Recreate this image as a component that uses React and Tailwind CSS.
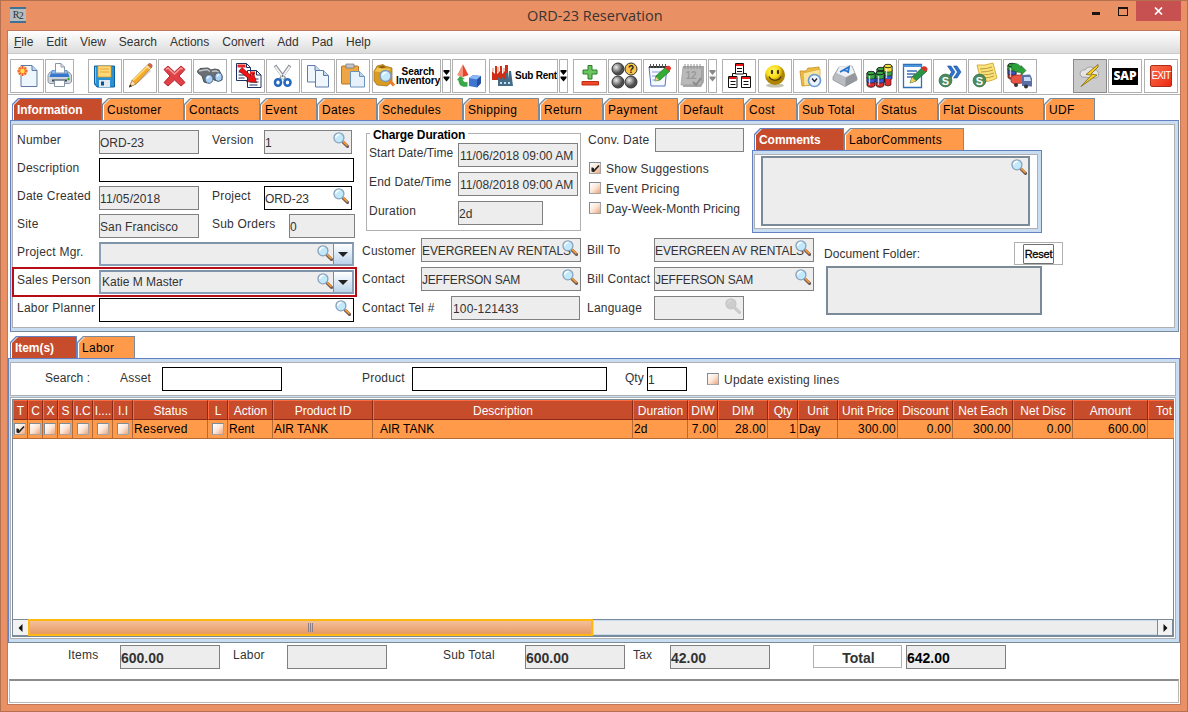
import { useState } from "react"

const MENU = ["File", "Edit", "View", "Search", "Actions", "Convert", "Add", "Pad", "Help"]

const TABS = [
  { name: "Information", w: 90 },
  { name: "Customer", w: 82 },
  { name: "Contacts", w: 76 },
  { name: "Event", w: 57 },
  { name: "Dates", w: 60 },
  { name: "Schedules", w: 86 },
  { name: "Shipping", w: 76 },
  { name: "Return", w: 64 },
  { name: "Payment", w: 75 },
  { name: "Default", w: 66 },
  { name: "Cost", w: 53 },
  { name: "Sub Total", w: 79 },
  { name: "Status", w: 62 },
  { name: "Flat Discounts", w: 106 },
  { name: "UDF", w: 51 },
]

const COLUMNS = [
  { head: "T", w: 15, check: true, on: true },
  { head: "C", w: 15, check: true },
  { head: "X", w: 15, check: true },
  { head: "S", w: 15, check: true },
  { head: "I.C", w: 20, check: true },
  { head: "I....", w: 20, check: true },
  { head: "I.I", w: 20, check: true },
  { head: "Status", w: 75, value: "Reserved", wide: true },
  { head: "L", w: 20, check: true },
  { head: "Action", w: 45, value: "Rent" },
  { head: "Product ID", w: 100, value: "AIR TANK" },
  { head: "Description", w: 260, value: "AIR TANK", indent: true },
  { head: "Duration", w: 55, value: "2d" },
  { head: "DIW", w: 30, value: "7.00", right: true },
  { head: "DIM", w: 50, value: "28.00", right: true },
  { head: "Qty", w: 30, value: "1", right: true },
  { head: "Unit", w: 40, value: "Day" },
  { head: "Unit Price", w: 60, value: "300.00", right: true },
  { head: "Discount", w: 55, value: "0.00", right: true },
  { head: "Net Each", w: 60, value: "300.00", right: true },
  { head: "Net Disc", w: 60, value: "0.00", right: true },
  { head: "Amount", w: 75, value: "600.00", right: true },
  { head: "Tot", w: 26, value: "", last: true },
]

export default function App() {
  const [tab, setTab] = useState("Information")

  return (
    <div className="flex h-[712px] w-[1188px] flex-col overflow-hidden border border-[#b5704f] bg-[#e99065] px-[6px] font-['Liberation_Sans',Arial,sans-serif] text-xs text-[#333]">
      <TitleBar />
      <div className="flex h-[675px] w-[1174px] flex-col border border-[#c1785a] bg-white">
        <div className="flex h-[23px] shrink-0 items-center border-b border-[#ccc] bg-gradient-to-b from-white to-[#dcdcdc] pl-[6px]">
          {MENU.map((m, i) => (
            <span key={m} className="mr-[13px]">
              {i === 0 ? <><u>F</u>ile</> : m}
            </span>
          ))}
        </div>
        <Toolbar />

        <div className="mt-[3px] flex h-[22px] shrink-0 pl-[4px]">
          {TABS.map(t => (
            <Tab key={t.name} name={t.name} width={t.w} active={t.name === tab} onClick={() => setTab(t.name)} />
          ))}
        </div>
        <div className="ml-[2px] h-[212px] w-[1169px] shrink-0 border border-r-[#7a8a99] border-b-[#7a8a99] border-t-[#6382bf] border-l-[#6382bf] bg-[#c8ddf2] pt-[3px] pr-[3px] pb-[3px] pl-px">
          <InformationForm />
        </div>

        <ItemsSection />
        <Totals />
        <div className="mt-[10px] ml-px h-[24px] w-[1170px] shrink-0 border border-[#b8b8b8] border-t-2 border-t-[#8c8c8c] bg-white" />
      </div>
    </div>
  )
}

function TitleBar() {
  return (
    <div className="flex h-[29px] shrink-0 items-start">
      <div className="mt-[6px] ml-[3px] flex h-[16px] w-[16px] items-center justify-center border-y-2 border-[#3f7196] bg-[#b9bcbc] font-['Liberation_Serif',serif] text-[10px] tracking-[-0.5px] text-[#26313a]">
        R<span className="mt-[2px]">2</span>
      </div>
      <div className="mt-[5px] ml-[501px] flex-1 font-['Open_Sans',sans-serif] text-[14.5px] leading-5 text-[#3a332f]">
        ORD-23 Reservation
      </div>
      <div className="mr-[18px] h-[14px] w-[8px] border-b-[3px] border-[#1c1412]" />
      <div className="mt-[6px] mr-[8px] h-[9px] w-[10px] border border-t-2 border-[#1c1412]" />
      <div className="mr-0 flex h-[20px] w-[45px] items-center justify-center bg-[#c75050]">
        <svg width="9" height="8" viewBox="0 0 9 8" stroke="#fff" strokeWidth="1.7">
          <path d="M1 0.5 8 7.5M8 0.5 1 7.5" />
        </svg>
      </div>
    </div>
  )
}

function Tab({ name, width, active, onClick }) {
  return (
    <button
      onClick={onClick}
      style={{ width }}
      className={`h-[22px] shrink-0 pt-px pr-px pl-px [clip-path:polygon(6px_0,100%_0,100%_100%,0_100%,0_6px)] ${active ? "bg-[#6382bf]" : "bg-[#7a8a99]"}`}
    >
      <div className="h-full w-full bg-white pl-px [clip-path:polygon(6px_0,100%_0,100%_100%,0_100%,0_6px)]">
        <div
          className={`flex h-full items-center pl-[3px] whitespace-nowrap [clip-path:polygon(6px_0,100%_0,100%_100%,0_100%,0_6px)] ${active ? "bg-[#c64c2c] font-bold tracking-[-0.05px] text-white" : "bg-[#fe9a4a] tracking-[0.33px] text-black"}`}
        >
          {name}
        </div>
      </div>
    </button>
  )
}

function Label({ children, className = "", tight }) {
  return <span className={`h-5 shrink-0 leading-5 whitespace-nowrap ${tight ? "tracking-[0.04px]" : "tracking-[0.22px]"} ${className}`}>{children}</span>
}

function Field({ value, className = "", lens, disabled, editable }) {
  return (
    <div
      className={`flex h-[24px] shrink-0 items-center overflow-hidden border leading-[22px] whitespace-nowrap ${editable ? "border-black bg-white" : "border-[#808080] bg-[#ededed]"} ${className}`}
    >
      <span className="min-w-0 flex-1 pt-[2px]">{value}</span>
      {lens && <Lens disabled={disabled} className="mr-[2px] mb-[4px]" />}
    </div>
  )
}

function Lens({ disabled, className = "" }) {
  const rim = disabled ? "#c6c6c6" : "#8aa3bb"
  return (
    <svg width="16" height="16" viewBox="0 0 17 17" className={`-ml-[16px] shrink-0 ${className}`}>
      <path d="m10 10 1.6 1.6" stroke={disabled ? "#c8c8c8" : "#777"} strokeWidth="2" />
      <path d="m11 11 4.4 4.2" stroke={disabled ? "#c8c8c8" : "#6d5a58"} strokeWidth="3.4" strokeLinecap="round" />
      <path d="m11.3 10.6 3.6 3.4" stroke={disabled ? "#cecece" : "#f0983a"} strokeWidth="2" strokeLinecap="round" />
      <circle cx="6.3" cy="6.2" r="5.3" fill={disabled ? "#cdcdcd" : "#c2e8fb"} stroke={rim} strokeWidth="1.4" />
      <path d="M3 6a3.4 3.4 0 0 1 4-3.3" fill="none" stroke={disabled ? "#d8d8d8" : "#fff"} strokeWidth="1.6" />
    </svg>
  )
}

function Combo({ value }) {
  return (
    <div className="flex h-[24px] w-[255px] border-2 border-[#8ba0b6] border-t-[#7f93a8] bg-[#ededed]">
      <span className="flex-1 pl-px leading-[20px]">{value}</span>
      <Lens className="mt-px" />
      <span className="flex w-[19px] items-center justify-center border-l border-[#7a8a99] bg-gradient-to-b from-white to-[#bcd3ea] pt-px">
        <svg width="10" height="5" viewBox="0 0 10 5"><path d="M0 0h10L5 5z" fill="#222" /></svg>
      </span>
    </div>
  )
}

function Check({ on, className = "" }) {
  return (
    <span className={`flex h-[12px] w-[12px] shrink-0 items-center justify-center border border-[#7f8b97] border-r-[#a9a4a4] border-b-[#a9a4a4] bg-gradient-to-br from-white via-[#fbe6d8] to-[#eda478] ${className}`}>
      {on && (
        <svg width="9" height="9" viewBox="0 0 9 9">
          <path d="M1.3 3.5v4M2.2 4v4M2.5 7.5 8 1.5" stroke="#222" strokeWidth="1.7" fill="none" />
        </svg>
      )}
    </span>
  )
}

function InformationForm() {
  return (
    <div className="flex h-[204px] w-[1163px] border border-[#b0b0b0] bg-white pl-px">
      <div className="w-[341px] shrink-0 pt-[5px]">
        <div className="flex h-[28px] pl-[3px]">
          <Label className="w-[82px]">Number</Label>
          <Field value="ORD-23" className="w-[100px]" />
          <Label className="ml-[13px] w-[52px]">Version</Label>
          <Field value="1" className="w-[88px]" lens />
        </div>
        <div className="flex h-[28px] pl-[3px]">
          <Label className="w-[82px]">Description</Label>
          <Field value="" className="w-[255px]" editable />
        </div>
        <div className="flex h-[28px] pl-[3px]">
          <Label className="w-[82px]">Date Created</Label>
          <Field value="11/05/2018" className="w-[100px] tracking-[0.1px]" />
          <Label className="ml-[13px] w-[52px]">Project</Label>
          <Field value="ORD-23" className="w-[88px]" lens editable />
        </div>
        <div className="flex h-[28px] pl-[3px]">
          <Label className="w-[82px]">Site</Label>
          <Field value="San Francisco" className="w-[100px] tracking-[0.1px]" />
          <Label className="ml-[13px] w-[77px]">Sub Orders</Label>
          <Field value="0" className="w-[66px]" />
        </div>
        <div className="flex h-[28px] pl-[3px]">
          <Label className="w-[82px]">Project Mgr.</Label>
          <Combo value="" />
        </div>
        <div className="-mt-px mb-[3px] flex h-[26px] pt-px pl-[3px] outline-2 outline-[#b80d14]">
          <Label className="w-[82px]">Sales Person</Label>
          <Combo value="Katie M Master" />
        </div>
        <div className="flex h-[28px] pl-[3px]">
          <Label className="w-[82px]">Labor Planner</Label>
          <Field value="" className="w-[255px]" editable lens />
        </div>
      </div>

      <div className="flex-1">
        <div className="flex h-[113px]">
          <ChargeDuration />
          <div className="ml-[6px] w-[165px] shrink-0 pt-[3px]">
            <div className="flex h-[30px] pl-px">
              <Label className="mt-[2px] w-[67px]">Conv. Date</Label>
              <Field value="" className="w-[89px]" />
            </div>
            <CheckRow on text="Show Suggestions" />
            <CheckRow text="Event Pricing" />
            <CheckRow text="Day-Week-Month Pricing" tight />
          </div>
          <Comments />
        </div>

        <div className="flex pl-[7px]">
          <div className="w-[219px] shrink-0">
            <div className="flex h-[29px]">
              <Label className="mt-[3px] w-[59px]">Customer</Label>
              <Field value="EVERGREEN AV RENTALS" className="w-[160px] tracking-[-0.1px]" lens />
            </div>
            <div className="flex h-[29px]">
              <Label className="mt-[2px] w-[59px]">Contact</Label>
              <Field value="JEFFERSON SAM" className="w-[160px] tracking-[-0.2px]" lens />
            </div>
            <div className="flex h-[29px]">
              <Label className="mt-[2px] w-[89px]">Contact Tel #</Label>
              <Field value="100-121433" className="w-[129px] pl-px tracking-[0.15px]" />
            </div>
          </div>
          <div className="ml-[6px] w-[227px] shrink-0">
            <div className="flex h-[29px]">
              <Label className="mt-[2px] w-[67px]">Bill To</Label>
              <Field value="EVERGREEN AV RENTALS" className="w-[160px] tracking-[-0.1px]" lens />
            </div>
            <div className="flex h-[29px]">
              <Label className="mt-[2px] w-[67px]">Bill Contact</Label>
              <Field value="JEFFERSON SAM" className="w-[160px] tracking-[-0.2px]" lens />
            </div>
            <div className="flex h-[29px]">
              <Label className="mt-[2px] w-[67px]">Language</Label>
              <Field value="" className="w-[90px]" lens disabled />
            </div>
          </div>
          <div className="ml-[10px] pt-[4px]">
            <div className="flex h-[24px]">
              <Label className="mt-[2px] w-[190px]" tight>Document Folder:</Label>
              <div className="flex h-[23px] w-[49px] items-center justify-center border border-[#b0b0b0]">
                <button className="h-[20px] w-[31px] rounded-[1px] border border-[#707070] text-[11px] leading-[18px] tracking-[-0.2px] text-black [-webkit-text-stroke:0.3px_black]">Reset</button>
              </div>
            </div>
            <div className="ml-[2px] h-[49px] w-[216px] border-2 border-[#7a8a99] bg-[#ededed]" />
          </div>
        </div>
      </div>
    </div>
  )
}

function ChargeDuration() {
  return (
    <div className="mt-[8px] ml-[11px] h-[98px] w-[215px] shrink-0 border border-[#b0b0b0] pl-[2px]">
      <div className="-mt-[8px] mb-[-1px] ml-[1px] h-[18px] w-fit bg-white px-[3px] leading-[18px] font-bold tracking-[-0.12px] text-black">
        Charge Duration
      </div>
      <div className="flex h-[29px]">
        <Label className="w-[89px]" tight>Start Date/Time</Label>
        <Field value="11/06/2018 09:00 AM" className="w-[120px] pl-px" />
      </div>
      <div className="flex h-[29px]">
        <Label className="w-[89px]">End Date/Time</Label>
        <Field value="11/08/2018 09:00 AM" className="w-[120px] pl-px" />
      </div>
      <div className="flex h-[29px]">
        <Label className="w-[89px]">Duration</Label>
        <Field value="2d" className="w-[85px]" />
      </div>
    </div>
  )
}

function CheckRow({ on, text, tight }) {
  return (
    <div className="flex h-5 items-center pl-[2px]">
      <Check on={on} />
      <Label className="mt-[2px] ml-[5px]" tight={tight}>{text}</Label>
    </div>
  )
}

function Comments() {
  return (
    <div className="w-[290px] shrink-0 pt-[3px]">
      <div className="flex h-[22px] pl-[2px]">
        <Tab name="Comments" width={90} active />
        <Tab name="LaborComments" width={120} />
      </div>
      <div className="h-[83px] border border-[#6382bf] bg-[#c8ddf2] pt-[3px] pr-[3px] pb-[3px] pl-px">
        <div className="h-full border border-[#b0b0b0] bg-white pt-px pl-[6px]">
          <div className="flex h-[70px] w-[269px] items-start justify-end border-2 border-[#7a8a99] bg-[#ededed] pt-px pr-px">
            <Lens />
          </div>
        </div>
      </div>
    </div>
  )
}

function ItemsSection() {
  return (
    <>
      <div className="mt-[4px] flex h-[22px] shrink-0 pl-[2px]">
        <Tab name="Item(s)" width={67} active />
        <Tab name="Labor" width={58} />
      </div>
      <div className="h-[285px] w-[1172px] shrink-0 border border-r-[#7a8a99] border-b-[#7a8a99] border-t-[#6382bf] border-l-[#6382bf] bg-[#c8ddf2] pt-[3px] pr-[3px] pb-[3px] pl-px">
        <div className="flex h-[34px] border border-[#b0b0b0] bg-white pt-[4px]">
          <Label className="mt-px ml-[34px] w-[75px]" tight>Search :</Label>
          <Label className="mt-px w-[42px]">Asset</Label>
          <Field value="" className="w-[120px]" editable />
          <Label className="mt-px ml-[80px] w-[50px]">Product</Label>
          <Field value="" className="w-[195px]" editable />
          <Label className="mt-px ml-[18px] w-[22px]" tight>Qty</Label>
          <Field value="1" className="w-[40px]" editable />
          <Check className="mt-[6px] ml-[20px]" />
          <Label className="mt-[3px] ml-[5px]">Update existing lines</Label>
        </div>
        <div className="mt-px h-[242px] border border-[#b0b0b0] bg-white p-px">
          <div className="flex h-[238px] flex-col border border-[#7a8a99]">
            <ItemTable />
            <ScrollBar />
          </div>
        </div>
      </div>
    </>
  )
}

function ItemTable() {
  return (
    <div className="w-[1161px] flex-1 overflow-hidden">
      <div className="flex h-[20px]">
        {COLUMNS.map(c => (
          <div
            key={c.head}
            style={{ width: c.w }}
            className={`flex shrink-0 items-center overflow-hidden border border-t-[#ff6a40] border-b-[#8b2a16] border-l-[#ff6a40] bg-[#c64c2c] pt-px whitespace-nowrap text-white ${c.last ? "border-r-0 pl-[7px]" : "justify-center border-r-[#8b2a16]"}`}
          >
            {c.head}
          </div>
        ))}
      </div>
      <div className="flex h-[19px] border-b border-[#b56a35] bg-[#fe9a4a] text-black">
        {COLUMNS.map(c => (
          <div
            key={c.head}
            style={{ width: c.w }}
            className={`flex shrink-0 items-center overflow-hidden whitespace-nowrap ${c.last ? "" : "border-r border-[#b56a35]"} ${c.check ? "justify-center" : c.right ? "justify-end pr-px" : c.indent ? "pl-[7px]" : "pl-px"} ${c.right ? "tracking-[0.2px]" : ""} ${c.wide ? "tracking-[0.3px]" : ""}`}
          >
            {c.check ? <Check on={c.on} /> : c.value}
          </div>
        ))}
      </div>
    </div>
  )
}

function ScrollBar() {
  return (
    <div className="flex h-[17px] w-[1160px] shrink-0 border-y border-[#7a8a99] bg-[#ededed]">
      <span className="flex w-[15px] items-center justify-center bg-[#f2f2f2]">
        <svg width="5" height="8" viewBox="0 0 5 8"><path d="M4.5 0v8L0.5 4z" fill="#111" /></svg>
      </span>
      <div className="-my-px flex w-[565px] items-center justify-center gap-px border-2 border-[#fdb813] bg-gradient-to-b from-[#f3c09a] to-[#e89a62]">
        <span className="h-[9px] w-px bg-[#8d7f86]" />
        <span className="h-[9px] w-px bg-[#8d7f86]" />
        <span className="h-[9px] w-px bg-[#8d7f86]" />
      </div>
      <div className="flex-1 border-y border-l border-[#c8ddf2]" />
      <span className="flex w-[16px] items-center justify-center border-x border-[#7a8a99] bg-[#f2f2f2]">
        <svg width="5" height="8" viewBox="0 0 5 8"><path d="M0.5 0v8l4-4z" fill="#111" /></svg>
      </span>
    </div>
  )
}

function Totals() {
  return (
    <div className="flex h-[26px] shrink-0 pt-[2px] pl-[60px]">
      <Label className="w-[52px]">Items</Label>
      <Field value="600.00" className="w-[100px] text-sm font-bold" />
      <Label className="ml-[13px] w-[54px]">Labor</Label>
      <Field value="" className="w-[100px]" />
      <Label className="ml-[56px] w-[82px]">Sub Total</Label>
      <Field value="600.00" className="w-[100px] text-sm font-bold" />
      <Label className="ml-[8px] w-[37px]">Tax</Label>
      <Field value="42.00" className="w-[100px] text-sm font-bold" />
      <div className="ml-[43px] h-[23px] w-[89px] border border-[#b0b0b0] pt-[2px] pl-[2px] text-center text-sm leading-5 font-bold">Total</div>
      <Field value="642.00" className="ml-[4px] w-[100px] text-sm font-bold text-black" />
    </div>
  )
}

/* ---------- toolbar ---------- */

function Tool({ children, className = "w-[34px]", pressed }) {
  return (
    <button className={`flex h-[34px] shrink-0 items-center overflow-hidden border ${pressed ? "border-[#8a8a8a] bg-[#cbcbcb]" : "border-[#b0b0b0] bg-white"} ${className}`}>
      {children}
    </button>
  )
}

function Icon({ children, w = 32 }) {
  return <svg width={w} height="32" viewBox={`0 0 ${w} 32`} fill="none" className="shrink-0">{children}</svg>
}

function Drop({ off }) {
  const c = off ? "#8a8a8a" : "#000"
  return (
    <Tool className="w-[9px]">
      <svg width="7" height="32" viewBox="0 0 7 32" fill={c}>
        <path d="M0.5 10h6v1.5L3.5 15 0.5 11.5zM0.5 16.5h6V18L3.5 21.5 0.5 18z" />
      </svg>
    </Tool>
  )
}

function Barrel({ x, y, top, mid, low }) {
  return (
    <g transform={`translate(${x} ${y})`}>
      <path d="M0 2v12c0 3 8 3 8 0V2z" fill={low} stroke="#111" strokeWidth="0.8" />
      <path d="M0 6v4.500c0 2 8 2 8 0V6z" fill={mid} stroke="#111" strokeWidth="0.6" />
      <path d="M0 2v4.500c0 2 8 2 8 0V2z" fill={top} stroke="#111" strokeWidth="0.6" />
      <ellipse cx="4" cy="2" rx="4" ry="1.7" fill={top} stroke="#111" strokeWidth="0.8" />
      <path d="M2.500 5v9" stroke="#fff" strokeOpacity="0.7" strokeWidth="1.300" />
    </g>
  )
}

function Coin({ x, y }) {
  return (
    <g>
      <circle cx={x} cy={y} r="6.4" fill="#4d8a5c" stroke="#3a6e48" strokeWidth="0.8" />
      <text x={x} y={y + 4} textAnchor="middle" fontSize="11" fontWeight="bold" fill="#fff">S</text>
    </g>
  )
}

function Toolbar() {
  return (
    <div className="flex h-[41px] w-[1172px] shrink-0 gap-px border-b border-[#b0b0b0] pt-[5px] pl-[2px]">
      {/* new */}
      <Tool>
        <Icon>
          <path d="M10 5.500h11l5 5v16H10z" fill="#edf5fd" stroke="#5d7ba6" />
          <path d="M21 5.500v5h5" fill="#bdd3ec" stroke="#5d7ba6" />
          <circle cx="11.500" cy="11" r="5" fill="#f9b064" />
          <path d="M11.500 6v10M6.500 11h10M8 7.500l7 7M15 7.500l-7 7" stroke="#f25b2d" strokeWidth="1.300" />
          <circle cx="11.500" cy="11" r="2.300" fill="#ffe14d" />
        </Icon>
      </Tool>
      {/* print */}
      <Tool className="w-[29px]">
        <Icon w={27}>
          <path d="M2 15 4 12h19l2.500 3v7l-2 1.500h-20L2 22z" fill="#cfd4da" stroke="#8f99a5" />
          <path d="M6 10h15l2.500 7H3.500z" fill="#3577cf" />
          <path d="M6.500 10.500h14l1 3H5.500z" fill="#8dbdf3" />
          <path d="M9.500 3.500H15l3.500 3.500v6h-9z" fill="#fff" stroke="#8796a8" />
          <path d="M15 3.500V7h3.500" stroke="#8796a8" />
          <path d="M6 20.500h15" stroke="#3c434b" strokeWidth="2" />
          <path d="M8.500 20.500h10v6h-10z" fill="#fff" stroke="#8796a8" />
          <circle cx="22.500" cy="19" r="1.200" fill="#21b421" />
        </Icon>
      </Tool>
      {/* save */}
      <Tool className="ml-[13px] w-[34px]">
        <Icon>
          <path d="M5.500 6h20v21H8l-2.500-3z" fill="#2a92d2" stroke="#11609e" />
          <path d="M6.500 7v16" stroke="#78c6ef" />
          <path d="M9 6h13v11H9z" fill="#fcd877" stroke="#d99b22" strokeWidth="0.700" />
          <path d="M11 9h9M11 12h9" stroke="#e2a63d" />
          <path d="M10 20h11v7H10z" fill="#dfeaf3" />
          <path d="M12 21.500h3v4h-3z" fill="#164f8b" />
        </Icon>
      </Tool>
      {/* edit */}
      <Tool>
        <Icon>
          <path d="M5.500 27 14 23 27 11l-1-1-13 12z" fill="#d0d0d0" />
          <path d="M5.500 27 8 20.500 24 4.500l3.500 3L12 24z" fill="#f8a92a" stroke="#9c6a1f" strokeWidth="0.700" />
          <path d="M9 20.500 24 6" stroke="#ffe077" strokeWidth="1.500" />
          <path d="M5.500 27 8 20.500l4 3.500z" fill="#f6dfb6" stroke="#9c6a1f" strokeWidth="0.500" />
          <path d="m5 27.500 1-3 2 1.500z" fill="#222" />
          <path d="m24 4.500 1-.8c1.500-.7 4 1.300 3 3l-.8 1z" fill="#e0644c" stroke="#8f3a2a" strokeWidth="0.500" />
          <path d="m22.500 6 3.500 3" stroke="#e6e6e6" strokeWidth="1.300" />
        </Icon>
      </Tool>
      {/* delete */}
      <Tool>
        <Icon>
          <path d="M9 6 15.500 12 22 6l4 3.500-6 6.500 6 6.500-4 3.500-6.500-6L9 26l-4-3.500 6-6.500-6-6.500z" fill="#df4146" stroke="#b52731" strokeLinejoin="round" />
          <path d="m7 9.500 2-1.500 6.500 6 6.500-6 1.500 1.500" stroke="#f59b99" strokeWidth="1.500" />
        </Icon>
      </Tool>
      {/* find */}
      <Tool>
        <Icon>
          <path d="M3.500 11 6 8.500l8-.5 3 2 4-1 4 1 3 6v4l-4 1-4-1-3-4-1 2-3 5-3-1-2-6-4-3z" fill="#6b6e72" stroke="#505356" strokeLinejoin="round" />
          <path d="m5 11 8-1.500 3 2M18 11.500l4-.8 3 2" stroke="#c1c5c9" strokeWidth="1.500" />
          <ellipse cx="15" cy="19" rx="4" ry="4.300" fill="#a9d0f7" stroke="#4c6279" />
          <ellipse cx="24.500" cy="17" rx="3.600" ry="4.200" fill="#a9d0f7" stroke="#4c6279" />
          <path d="M13 18.500q1-2 2.500-1.500M23 16.500q1-2 2.500-1.500" stroke="#fff" strokeWidth="1.300" />
        </Icon>
      </Tool>
      {/* transfer */}
      <Tool className="ml-[3px] w-[34px]">
        <Icon>
          <path d="M4.500 3.500h10l4 4v13h-14zM15.500 10.500h9l4.500 4.500v12.500H15.500z" fill="#fff" stroke="#1e3263" />
          <path d="M5.500 4.500h8v3h-8zM18 11.500h5v3h-5z" fill="#e8251f" />
          <path d="M14.500 3.500v4h4M24.500 10.500V15H29M6.500 12h5M6.500 15h7M6.500 18h6M17.500 19h9M17.500 22h9M17.500 25h8" stroke="#1e3263" />
          <path d="m7 11 3-3.500 9 8 2.500-2.500 3 9.500-10-1 2.500-2.500z" fill="#f11313" stroke="#5a0a0a" strokeWidth="0.600" />
        </Icon>
      </Tool>
      {/* cut */}
      <Tool>
        <Icon>
          <path d="M8 5.500 18 19M23 5.500 13.500 19" stroke="#8b9197" strokeWidth="3.200" />
          <path d="M8.300 6.500 17 18.500M22.700 6.500 14.500 18.500" stroke="#f2f4f6" strokeWidth="1.900" />
          <circle cx="15.600" cy="16" r="1" fill="#777" />
          <ellipse cx="11" cy="22.500" rx="3" ry="3.300" stroke="#2469bd" strokeWidth="2.600" />
          <ellipse cx="20.500" cy="22.500" rx="3" ry="3.300" stroke="#2469bd" strokeWidth="2.600" />
        </Icon>
      </Tool>
      {/* copy */}
      <Tool>
        <Icon>
          <path d="M5.500 5.500h7.500l5 5V22H5.500z" fill="#f0f6fd" stroke="#5f7ca8" />
          <path d="M13 5.500v5h5" fill="#c5d8ee" stroke="#5f7ca8" />
          <path d="M13.500 10.500h8l5 5V27h-13z" fill="#f0f6fd" stroke="#5f7ca8" />
          <path d="M21.500 10.500v5h5" fill="#c5d8ee" stroke="#5f7ca8" />
        </Icon>
      </Tool>
      {/* paste */}
      <Tool>
        <Icon>
          <rect x="4.500" y="6" width="17" height="18" rx="1" fill="#eda643" stroke="#bd7321" />
          <path d="M9 4h8v4H9z" fill="#c2c6cb" stroke="#6f747b" strokeWidth="0.700" />
          <path d="M13.500 11.500h9l5 5V27h-14z" fill="#e7f1fc" stroke="#6d92bd" />
          <path d="M22.500 11.500v5h5" fill="#bcd5ef" stroke="#6d92bd" />
        </Icon>
      </Tool>
      {/* search inventory */}
      <Tool className="ml-px w-[69px]">
        <Icon w={24}>
          <path d="m1 11 2-3 1-2 6-1.500 2 1.500 7 2v14l-5 4-10-1-3-4z" fill="#d99b22" stroke="#9b6712" strokeWidth="0.700" />
          <path d="m1.500 11.500 3-4L18 9l-5 3.500z" fill="#f2c54f" />
          <path d="m5 7 5-1.500 3 2-4 1z" fill="#8b5d10" />
          <circle cx="12.500" cy="16" r="5.500" fill="#c4e7fa" stroke="#7a98b4" strokeWidth="1.400" />
          <path d="M9.500 15.500a3.500 3.500 0 0 1 4-3" stroke="#fff" strokeWidth="1.500" />
          <path d="m16.500 20.500 4.500 5" stroke="#ea7b30" strokeWidth="3" />
        </Icon>
        <span className="-ml-px w-[44px] text-center text-[10px] leading-[9.5px] font-bold tracking-[-0.1px] text-black">Search Inventory</span>
      </Tool>
      <Drop />
      {/* assets */}
      <Tool>
        <Icon>
          <path d="m10 4.500 5.500 10.500-5.500 2-5.500-2z" fill="#e6442d" />
          <path d="m10 4.500-5.500 10.500 5.500 2z" fill="#f9927a" />
          <path d="m4 20 3-4 5 3-2.500.5c1 2 2 3 5 2.500v4.500c-6 1-8.500-1-9-6z" fill="#39a849" />
          <path d="m16 18 4-3 8 1v7l-4 4.500-8-1.500z" fill="#3f76cf" />
          <path d="m16 18 4-3 8 1-4 3.500z" fill="#8db7f2" />
          <path d="M24 19.500v8l4-4.500v-7z" fill="#2650a0" />
        </Icon>
      </Tool>
      {/* sub rent */}
      <Tool className="ml-[2px] w-[69px]">
        <Icon w={25}>
          <path d="M2 20v-9l3 3V6h2v8l3-3V6h2v8l3-3V5h3v15z" fill="#cf2d15" />
          <path d="M3 8v3M8 7v5M14 8v4" stroke="#f07b4c" />
          <path d="M8 26V17l4 3v-3l4 3v-7h2v6l1-8h2l2 15z" fill="#456b88" />
          <path d="M10 22h2v2h-2zM14 22h2v2h-2zM18 22h2v2h-2z" fill="#c3e0f1" />
        </Icon>
        <span className="w-[42px] text-[10px] font-bold tracking-[-0.25px] whitespace-nowrap text-black">Sub Rent</span>
      </Tool>
      <Drop />
      {/* add remove */}
      <Tool className="ml-[4px] w-[34px]">
        <Icon>
          <path d="M14 5.500h4V10h5v4h-5v5h-4v-5H9v-4h5z" fill="#6cc45f" stroke="#267e29" />
          <path d="M8 21.500h16.500v3.500H8z" fill="#f0492a" stroke="#be2c14" />
        </Icon>
      </Tool>
      {/* status balls */}
      <Tool>
        <Icon>
          <defs>
            <radialGradient id="ball" cx="0.35" cy="0.35"><stop stopColor="#eee" /><stop offset="1" stopColor="#4c4c4c" /></radialGradient>
          </defs>
          <circle cx="9" cy="9" r="6" fill="url(#ball)" stroke="#333" />
          <circle cx="22" cy="9" r="6" fill="#f9c546" stroke="#333" />
          <circle cx="9" cy="22" r="6" fill="url(#ball)" stroke="#333" />
          <circle cx="22" cy="22" r="6" fill="url(#ball)" stroke="#333" />
          <text x="22" y="13" textAnchor="middle" fontSize="10" fontWeight="bold" fill="#222">?</text>
        </Icon>
      </Tool>
      {/* notepad */}
      <Tool>
        <Icon>
          <path d="M5 7h18l-2 19H7z" fill="#f6f9fd" stroke="#5a74c2" />
          <path d="M5 6h18v2H5z" fill="#333" />
          <path d="M6.500 4v4M9.500 4v4M12.500 4v4M15.500 4v4M18.500 4v4M21.500 4v4" stroke="#555" />
          <path d="M8 12h9M8 16h7M8.500 20h4" stroke="#8b99df" />
          <path d="m11 21 1-5 10-9 4 4-10 9z" fill="#35ad35" stroke="#196a1c" strokeWidth="0.700" />
          <path d="m21 8 2-2c2-1 4.500 1 4 3l-2 2z" fill="#e7332c" />
          <path d="m11 21 1-4 3 3z" fill="#f2cf93" />
        </Icon>
      </Tool>
      {/* calendar, unavailable */}
      <Tool className="w-[29px]">
        <Icon w={27}>
          <path d="M4 6h21v16l-3 5H4z" fill="#a9a9a9" />
          <path d="M4 7h19l-1 18H2z" fill="#b9b9b9" stroke="#999" strokeWidth="0.700" />
          <path d="M6 4v5M9 4v5M12 4v5M15 4v5M18 4v5M21 4v5" stroke="#929292" />
          <text x="12" y="19" textAnchor="middle" fontSize="10" fontWeight="bold" fill="#999">12</text>
          <path d="m14 22 3 3 5-7" stroke="#8b8b8b" strokeWidth="2" />
        </Icon>
      </Tool>
      <Drop off />
      {/* tree */}
      <Tool className="ml-[4px] w-[34px]">
        <Icon>
          <path d="M9.500 17v-3.500h3M23.500 17v-3.500h-3" stroke="#111" />
          <path d="M12.500 3.500h8v10.500h-8zM5.500 16.500h8.500v11H5.500zM18.500 16.500h9v11h-9z" fill="#fff" stroke="#111" />
          <path d="M13 4h7v2h-7zM6 17h7.500v2H6zM19 17h8v2h-8z" fill="#ed1616" />
          <path d="M14 8.500h5M14 11.500h5M7.500 21.500h5M7.500 24.500h5M20.500 21.500h5M20.500 24.500h5" stroke="#111" />
        </Icon>
      </Tool>
      {/* smiley */}
      <Tool className="ml-px w-[34px]">
        <Icon>
          <defs>
            <radialGradient id="face" cx="0.4" cy="0.3"><stop stopColor="#fff76a" /><stop offset="0.65" stopColor="#f8dc16" /><stop offset="1" stopColor="#ad8404" /></radialGradient>
          </defs>
          <ellipse cx="16" cy="25.500" rx="9" ry="2" fill="#c4c4b0" />
          <circle cx="16" cy="15" r="10" fill="url(#face)" />
          <ellipse cx="13" cy="12" rx="1.200" ry="2.200" fill="#453208" />
          <ellipse cx="19" cy="12" rx="1.200" ry="2.200" fill="#453208" />
          <path d="M10 16.500c2 5 10 5 12 0" stroke="#453208" strokeWidth="1.200" />
        </Icon>
      </Tool>
      {/* history folder */}
      <Tool>
        <Icon>
          <path d="m6 11 6 0 2-3h3l8-1v17l-17 2z" fill="#efbd43" stroke="#c18b20" strokeWidth="0.800" />
          <path d="m9 13 17-4v14l-16 3z" fill="#fae49a" stroke="#d29e30" strokeWidth="0.700" />
          <circle cx="20.500" cy="20.500" r="6" fill="#e9f4ff" stroke="#6a9bd3" strokeWidth="1.700" />
          <path d="m18 18.500 2.500 3 2.500-3" stroke="#223" strokeWidth="1.300" />
        </Icon>
      </Tool>
      {/* key cap */}
      <Tool>
        <Icon>
          <path d="m4 17 6-10 13-1 5 12v2l-12 6.500L4 20z" fill="#b9bcc1" stroke="#878c91" strokeWidth="0.700" />
          <path d="m10.500 6.500 12-.5 3 7-9 4-9-4z" fill="#f0f1f4" />
          <path d="m16.500 18 0 8.500L28 20v-2l-2.500-5z" fill="#94989d" />
          <path d="m11 12 9-5-1 6m-5-3 5 1.500" stroke="#2475cb" strokeWidth="1.800" />
        </Icon>
      </Tool>
      {/* barrels */}
      <Tool>
        <Icon>
          <Barrel x={13} y={7} top="#37a546" mid="#375bd3" low="#dc2b31" />
          <Barrel x={20} y={4} top="#f0df3c" mid="#35a546" low="#375bd3" />
          <Barrel x={3} y={11} top="#37a546" mid="#375bd3" low="#dc2b31" />
          <Barrel x={12} y={11} top="#37a546" mid="#375bd3" low="#dc2b31" />
          <path d="M21 19v6q3 2 6 0v-6" fill="#dc2b31" stroke="#111" strokeWidth="0.600" />
        </Icon>
      </Tool>
      {/* edit form */}
      <Tool>
        <Icon>
          <path d="M4.500 4.500h18v23h-18z" fill="#fff" stroke="#2e72bc" strokeWidth="1.300" />
          <path d="M4.500 5h18v2h-18z" fill="#4e94da" />
          <path d="M8 11h10M8 14h8M8 17h6" stroke="#3b70b3" strokeWidth="1.500" />
          <path d="m11 23 2-6L24 7l4 4-11 10z" fill="#299544" stroke="#175d29" strokeWidth="0.700" />
          <path d="m13 17 4 4-6 2z" fill="#f2c85a" />
          <path d="m22 8.500 2-2c2-1 5 1 4.500 3.500l-2 2z" fill="#d7352c" />
        </Icon>
      </Tool>
      {/* charge forward */}
      <Tool>
        <Icon>
          <path d="M13.500 6h3.500l4 6-4 6h-3.500l4-6zM19.500 6H23l4 6-4 6h-3.500l4-6z" fill="#2b73cf" stroke="#1e539b" strokeWidth="0.600" />
          <Coin x={11.5} y={20.5} />
        </Icon>
      </Tool>
      {/* charge note */}
      <Tool>
        <Icon>
          <path d="M8 5q8 1 16-2l4 15q-9 5-16 3z" fill="#fbe37a" stroke="#cb9d25" strokeWidth="0.800" />
          <path d="M11 9q7 0 12-2M12 12q7 0 12-2M13 15q7 0 12-2M14 18q6 0 11-2" stroke="#b99a3c" />
          <Coin x={10.5} y={20.5} />
        </Icon>
      </Tool>
      {/* ship */}
      <Tool>
        <Icon>
          <Barrel x={4} y={3} top="#3bab49" mid="#4052bd" low="#d33531" />
          <path d="M7 4.500c3-2 9-1 10 3.500v-2.500l5 5-5 5v-3c-5 0-10-2-10-8z" fill="#2ba13b" stroke="#156220" strokeWidth="0.600" />
          <path d="m7 17 4-2h8v8l-9 1-3-2z" fill="#e65442" stroke="#9e3029" strokeWidth="0.700" />
          <path d="M18 15l8-.5 2 4v8l-10-.5z" fill="#596fa6" />
          <path d="M20 17h6l1 4h-7z" fill="#c4d9f3" />
          <circle cx="12" cy="25" r="2" fill="#333" /><circle cx="22" cy="26.500" r="2" fill="#333" />
        </Icon>
      </Tool>
      {/* quick action */}
      <Tool className="ml-[35px] w-[34px]" pressed>
        <Icon>
          <path d="M8 17c-4-3-1-8 3-7 2-4 9-4 10 0 4 0 5 7 1 8z" fill="#e4e4e4" stroke="#888" strokeWidth="0.700" />
          <path d="m24 4.500-12 10 5.500.5L7 26.500 23 15l-6-1 7-7z" fill="#f9cf1d" stroke="#7b6510" strokeWidth="0.800" />
        </Icon>
      </Tool>
      <Tool>
        <span className="ml-[3px] flex h-[17px] w-[26px] items-center justify-center bg-black font-['Open_Sans',sans-serif] text-[12px] font-extrabold text-white">SAP</span>
      </Tool>
      <Tool className="ml-px w-[34px]">
        <span className="ml-[5px] flex h-[22px] w-[22px] items-center justify-center rounded-[2px] border border-[#a92c1c] bg-gradient-to-br from-[#fa6c4a] to-[#ec230c] text-[10px] tracking-[-0.8px] text-white">EXIT</span>
      </Tool>
    </div>
  )
}
